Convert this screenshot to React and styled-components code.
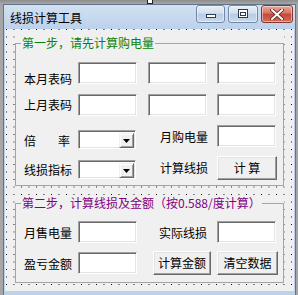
import React from "react";
import styled, { createGlobalStyle } from "styled-components";

const GlobalStyle = createGlobalStyle`
  html, body { margin: 0; padding: 0; }
  body {
    width: 298px;
    height: 295px;
    overflow: hidden;
    background: #a3a3a3;
    font-family: "Noto Sans CJK SC", "Liberation Sans", sans-serif;
  }
`;

const Desk = styled.div`
  position: relative;
  height: 295px;
  box-sizing: border-box;
  padding: 4px 2px 0 3px;
  background: linear-gradient(#8c8c8c, #a6a6a6 4px, #a6a6a6);
  overflow: hidden;
`;

const Handle = styled.div`
  position: absolute;
  left: 147px;
  top: -1px;
  width: 4px;
  height: 3px;
  background: #fff;
  border: 1px solid #222;
`;

const Window = styled.div`
  border: 1px solid #62748a;
  border-bottom: none;
  background: #bcd1ea;
  padding: 0 1px 4px;
`;

const TitleBar = styled.div`
  display: flex;
  align-items: flex-start;
  justify-content: space-between;
  height: 24px;
  margin: 0 -1px;
  padding: 0 2px 0 6px;
  background: linear-gradient(#d2e1f2, #bbd1ea);
`;

const Title = styled.span`
  font-size: 12px;
  line-height: 25px;
  color: #000;
`;

const Caps = styled.div`
  display: flex;
  gap: 3px;
`;

const CapButton = styled.div`
  display: flex;
  align-items: center;
  justify-content: center;
  box-sizing: border-box;
  width: ${(p) => p.$w}px;
  height: 18px;
  border: 1px solid ${(p) => (p.$close ? "#86362e" : "#7189a8")};
  border-radius: 3px;
  background: ${(p) =>
    p.$close
      ? "linear-gradient(#e9a99a, #d7725f 45%, #c5473a 50%, #d06f5c)"
      : "linear-gradient(#e6eef8, #d2dfee 45%, #b8cbe2 50%, #cbdaec)"};
  box-shadow: inset 0 0 0 1px rgba(255, 255, 255, 0.45);
`;

const Client = styled.div`
  height: 262px;
  box-sizing: border-box;
  padding: 7px 10px 0;
  background-color: #f0f0f0;
  background-image: conic-gradient(at 1.25px 1.25px, transparent 75%, #000 0);
  background-size: 7.5px 7.5px;
  background-position: 1px 0;
`;

const Group = styled.div`
  background: #f0f0f0;
  & + & {
    margin-top: 10px;
  }
`;

const Frame = styled.fieldset`
  margin: 0;
  padding: 0;
  min-width: 0;
  border: 1px solid #a4a4a4;
`;

const Caption = styled.legend`
  margin-left: 5px;
  padding: 0 1px;
  font-size: 12px;
  line-height: 14px;
  color: ${(p) => p.$color};
`;

const Form = styled.div`
  display: grid;
  grid-template-columns: 54px 70px 69px 62px;
  grid-template-rows: ${(p) => p.$rows};
  align-items: start;
  padding: ${(p) => p.$pt}px 0 ${(p) => p.$pb}px 8px;
`;

const Label = styled.span`
  font-size: 12px;
  line-height: 14px;
  color: #000;
  white-space: nowrap;
  margin-top: ${(p) => p.$top ?? 5}px;
  justify-self: ${(p) => (p.$end ? "end" : "start")};
  margin-right: ${(p) => p.$end || 0}px;
`;

const SpreadLabel = styled(Label)`
  width: 46px;
  text-align-last: justify;
`;

const sunken = `
  box-sizing: border-box;
  border: 1px solid;
  border-color: #a0a0a0 #fff #fff #a0a0a0;
  box-shadow: inset 1px 1px 0 #696969, inset -1px -1px 0 #e3e3e3;
  background: #fff;
`;

const TextBox = styled.input`
  ${sunken}
  width: ${(p) => p.$w || 59}px;
  height: 22px;
  margin: ${(p) => p.$top || 0}px 0 0;
  padding: 0 3px;
  outline: none;
  font: 12px "Noto Sans CJK SC", sans-serif;
`;

const Combo = styled.div`
  ${sunken}
  display: flex;
  justify-content: flex-end;
  width: 58px;
  height: 19px;
  padding: 2px 1px 2px 2px;
  margin-top: ${(p) => p.$top || 0}px;
`;

const DropButton = styled.span`
  display: flex;
  align-items: center;
  justify-content: center;
  box-sizing: border-box;
  width: 15px;
  height: 15px;
  background: #f0f0f0;
  border: 1px solid;
  border-color: #f0f0f0 #696969 #696969 #f0f0f0;
  box-shadow: inset 1px 1px 0 #fff, inset -1px -1px 0 #a0a0a0;
`;

const Button = styled.button`
  box-sizing: border-box;
  width: ${(p) => p.$w}px;
  height: 24px;
  padding: 0;
  margin-top: ${(p) => p.$top || 0}px;
  justify-self: ${(p) => (p.$end ? "end" : "start")};
  margin-right: ${(p) => p.$end || 0}px;
  background: #f0f0f0;
  border: 1px solid;
  border-color: #fff #696969 #696969 #fff;
  box-shadow: inset -1px -1px 0 #a0a0a0, inset 1px 1px 0 #e3e3e3;
  font: 12px/1 "Noto Sans CJK SC", sans-serif;
  color: #000;
  white-space: pre;
`;

const Arrow = () => (
  <svg width="7" height="4" viewBox="0 0 7 4">
    <polygon points="0,0 7,0 3.5,4" fill="#000" />
  </svg>
);

const ComboBox = ({ top }) => (
  <Combo $top={top}>
    <DropButton>
      <Arrow />
    </DropButton>
  </Combo>
);

const MinIcon = () => (
  <svg width="12" height="10" viewBox="0 0 12 10">
    <rect x="1.5" y="5.5" width="9" height="3" fill="#fff" stroke="#2b3a4c" />
  </svg>
);

const RestoreIcon = () => (
  <svg width="12" height="10" viewBox="0 0 12 10">
    <rect x="1.5" y="0.5" width="9" height="8" fill="#fff" stroke="#2b3a4c" />
    <rect x="3.5" y="3.5" width="5" height="3" fill="#fff" stroke="#2b3a4c" />
  </svg>
);

const CloseIcon = () => (
  <svg width="14" height="11" viewBox="0 0 14 11">
    <path d="M2 1 L12 10 M12 1 L2 10" stroke="#5a1f1a" strokeWidth="3.6" strokeLinecap="square" />
    <path d="M2 1 L12 10 M12 1 L2 10" stroke="#fff" strokeWidth="2" strokeLinecap="square" />
  </svg>
);

export default function App() {
  return (
    <>
      <GlobalStyle />
      <Desk>
        <Handle />
        <Window>
          <TitleBar>
            <Title>线损计算工具</Title>
            <Caps>
              <CapButton $w={29}>
                <MinIcon />
              </CapButton>
              <CapButton $w={30}>
                <RestoreIcon />
              </CapButton>
              <CapButton $w={32} $close>
                <CloseIcon />
              </CapButton>
            </Caps>
          </TitleBar>
          <Client>
            <Group>
              <Frame>
                <Caption $color="#0a820a">第一步，请先计算购电量</Caption>
                <Form $rows="32px 31px 31px 24px" $pt={12} $pb={5}>
                  <Label $top={10}>本月表码</Label>
                  <TextBox />
                  <TextBox />
                  <TextBox />

                  <Label $top={4}>上月表码</Label>
                  <TextBox />
                  <TextBox />
                  <TextBox />

                  <SpreadLabel $top={9}>倍 率</SpreadLabel>
                  <ComboBox top={5} />
                  <Label $end={9}>月购电量</Label>
                  <TextBox />

                  <Label $top={7}>线损指标</Label>
                  <ComboBox top={4} />
                  <Label $end={9}>计算线损</Label>
                  <Button $w={60}>计 算</Button>
                </Form>
              </Frame>
            </Group>
            <Group>
              <Frame>
                <Caption $color="#800080">第二步，计算线损及金额（按0.588/度计算）</Caption>
                <Form $rows="30px 25px" $pt={11} $pb={6}>
                  <Label>月售电量</Label>
                  <TextBox />
                  <Label $end={10}>实际线损</Label>
                  <TextBox />

                  <Label $top={6}>盈亏金额</Label>
                  <TextBox $top={1} />
                  <Button $w={58} $end={6}>计算金额</Button>
                  <Button $w={61}>清空数据</Button>
                </Form>
              </Frame>
            </Group>
          </Client>
        </Window>
      </Desk>
    </>
  );
}
